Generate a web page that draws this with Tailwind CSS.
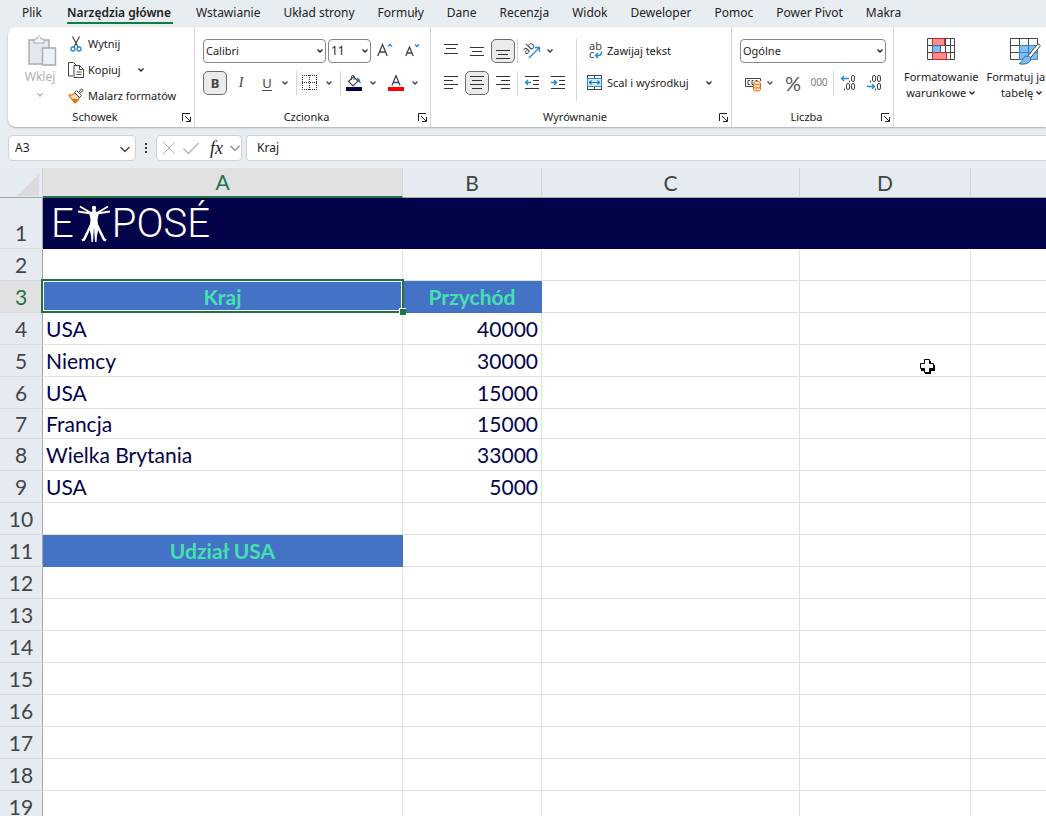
<!DOCTYPE html>
<html lang="pl">

<head>
    <meta charset="UTF-8">
    <meta name="viewport" content="width=device-width, initial-scale=1.0">
    <title>Expose - arkusz</title>
    <script src="https://cdn.jsdelivr.net/npm/@tailwindcss/browser@4"></script>
</head>

<body class="flex h-screen flex-col overflow-hidden bg-[#e8edf2] font-['Noto_Sans',sans-serif] text-xs text-[#222]">

    <!-- shared icons -->
    <svg class="hidden">
        <symbol id="chev" viewBox="0 0 8 8">
            <path d="M1.5 2.5 4 5l2.5-2.5" fill="none" stroke="currentColor" stroke-width="1.3" />
        </symbol>
        <symbol id="launch" viewBox="0 0 9 9">
            <path d="M.5 8V.5H8M3 3l5 5M8.500 4v4.500H4" fill="none" stroke="currentColor" />
        </symbol>
    </svg>

    <!-- tabs -->
    <nav class="flex h-[27px] shrink-0 items-start gap-[23px] pl-[22px] whitespace-nowrap leading-[25px]">
        <a href="#" class="mr-[2px]">Plik</a>
        <a href="#" class="h-6 border-b-2 border-[#107c41] pr-[2px] font-semibold">Narzędzia główne</a>
        <a href="#">Wstawianie</a>
        <a href="#">Układ strony</a>
        <a href="#">Formuły</a>
        <a href="#">Dane</a>
        <a href="#">Recenzja</a>
        <a href="#">Widok</a>
        <a href="#">Deweloper</a>
        <a href="#">Pomoc</a>
        <a href="#">Power Pivot</a>
        <a href="#">Makra</a>
    </nav>

    <!-- ribbon -->
    <div class="ml-2 flex h-[100px] shrink-0 overflow-hidden rounded-l-lg bg-white text-[11px] whitespace-nowrap shadow-[0_1px_2px_#a9afb5]">

        <section class="flex w-[186px] shrink-0 flex-col">
            <div class="flex h-[82px] pt-1">
                <button class="ml-1 flex w-14 flex-col items-center pt-1 text-xs text-[#b0b0b0]">
                    <svg class="h-8 w-7" viewBox="0 0 28 32" fill="none" overflow="visible">
                        <path d="M3 5h20v24H3z" fill="#e3e8ee" stroke="#a8adb2" stroke-width="1.500" />
                        <path d="M8 8V4h3c0-4 4-4 4 0h3v4z" fill="#f4f4f4" stroke="#a8adb2" />
                        <path d="M16.500 13h13v17h-13z" fill="#eef1f5" stroke="#a8adb2" stroke-width="1.500" />
                    </svg>
                    <span class="leading-5">Wklej</span>
                    <svg class="mt-1 size-2"><use href="#chev" /></svg>
                </button>
                <div class="flex flex-col">
                    <button class="flex h-[26px] items-center gap-1">
                        <svg class="size-4" viewBox="0 0 16 16" fill="none">
                            <path d="M4.500 0.500 10 11M11.500 .5 6 11" stroke="#444" stroke-width="1.200" />
                            <circle cx="5" cy="13" r="2" stroke="#1e8ad6" stroke-width="1.300" />
                            <circle cx="11" cy="13" r="2" stroke="#1e8ad6" stroke-width="1.300" />
                        </svg>
                        Wytnij
                    </button>
                    <button class="flex h-[26px] items-center gap-1">
                        <svg class="size-4" viewBox="0 0 16 16" fill="none" stroke="#444">
                            <path d="M5 14H.5V.5h5L8 3" />
                            <path d="M6 3.500h5.500l4 4v8H6zM11.500 3.500v4h4M8.500 10h5M8.500 12.500h5" />
                        </svg>
                        Kopiuj
                        <svg class="ml-3 size-2"><use href="#chev" /></svg>
                    </button>
                    <button class="flex h-[26px] items-center gap-1">
                        <svg class="size-4" viewBox="0 0 16 16" fill="none">
                            <path d="M1 7c3 .5 4.500-.5 6-2l4.500 4.500C10.500 12 9 14 7 15c-1-2-3.500-3-6-8z" fill="#fde8d3" stroke="#e8710a" stroke-width="1.200" />
                            <path d="M3 10.500 10 11 7 15z" fill="#e8710a" />
                            <path d="M6.500 4.500 8.500 2.500l2 2L13.500.8l1.700 1.700L11.500 5.500l2 2-2 2z" fill="#fff" stroke="#444" />
                        </svg>
                        Malarz formatów
                    </button>
                </div>
            </div>
            <div class="flex items-center pr-[3px] leading-4">
                <span class="grow text-center">Schowek</span>
                <button aria-label="Schowek - opcje"><svg class="size-[9px]"><use href="#launch" /></svg></button>
            </div>
        </section>

        <section class="flex w-[236px] shrink-0 flex-col border-l border-[#d6d6d6]">
            <div class="flex h-[82px] flex-col gap-2 pt-3 pl-2">
                <div class="flex h-6 items-center">
                    <label class="relative mr-[2px]">
                        <select aria-label="Czcionka" class="h-6 w-[123px] appearance-none rounded-[4px] border border-[#868686] bg-white pl-[2px] text-[11px]"><option>Calibri</option></select>
                        <svg class="pointer-events-none absolute top-2 right-[2px] size-2"><use href="#chev" /></svg>
                    </label>
                    <label class="relative">
                        <select aria-label="Rozmiar czcionki" class="h-6 w-[43px] appearance-none rounded-[4px] border border-[#868686] bg-white pl-[2px] text-xs"><option>11</option></select>
                        <svg class="pointer-events-none absolute top-2 right-[2px] size-2"><use href="#chev" /></svg>
                    </label>
                    <button class="ml-[2px] flex w-6 justify-center" aria-label="Zwiększ czcionkę">
                        <svg class="size-4" viewBox="0 0 16 16" fill="none">
                            <path d="M.8 13 5.500 1.500 10.200 13M2.400 9h6.200" stroke="#444" stroke-width="1.300" />
                            <path d="M11 3.500 13 1.500l2 2" stroke="#1e8ad6" stroke-width="1.300" />
                        </svg>
                    </button>
                    <button class="ml-[3px] flex w-6 justify-center" aria-label="Zmniejsz czcionkę">
                        <svg class="size-4" viewBox="0 0 16 16" fill="none">
                            <path d="M1.800 13 5.500 4 9.200 13M3 10h5" stroke="#444" stroke-width="1.300" />
                            <path d="M11 1.500 13 3.500l2-2" stroke="#1e8ad6" stroke-width="1.300" />
                        </svg>
                    </button>
                </div>
                <div class="flex h-6 items-center text-sm text-[#444]">
                    <button class="size-6 rounded-[5px] border border-[#6b6b6b] bg-[#ebebeb] text-[13px] leading-5 font-bold">B</button>
                    <button class="ml-[2px] size-6 font-['Liberation_Serif',serif] italic">I</button>
                    <button class="ml-[2px] size-6 text-[13px] leading-5 underline underline-offset-2">U</button>
                    <svg class="mx-[2px] size-2"><use href="#chev" /></svg>
                    <span class="ml-[5px] h-6 w-px bg-[#d6d6d6]"></span>
                    <button class="flex w-[26px] justify-center" aria-label="Obramowanie">
                        <svg class="size-4" viewBox="0 0 16 16" fill="none" stroke="#333">
                            <path d="M0 .5h15M0 7.500h15M0 14.500h15M.5 0v15M7.500 0v15M14.500 0v15" stroke-dasharray="1 1" />
                        </svg>
                    </button>
                    <svg class="mx-[2px] size-2"><use href="#chev" /></svg>
                    <span class="ml-[5px] h-6 w-px bg-[#d6d6d6]"></span>
                    <button class="flex w-[26px] justify-center" aria-label="Kolor wypełnienia">
                        <svg class="size-4" viewBox="0 0 16 16" fill="none">
                            <path d="M2.500 6.500 7.500 1.500 12 6 7 11z" stroke="#444" stroke-width="1.200" />
                            <path d="M5.500 5V1.500c0-1.500 2.500-1.500 2.500 0V5" stroke="#444" />
                            <path d="M10.500 3c3 0 4 2 4 6l-2.500-3z" fill="#1e6fb8" />
                            <path d="M0 12h16v4H0z" fill="#03034a" />
                        </svg>
                    </button>
                    <svg class="mx-[2px] size-2"><use href="#chev" /></svg>
                    <button class="ml-1 flex w-[26px] justify-center" aria-label="Kolor czcionki">
                        <svg class="size-4" viewBox="0 0 16 16" fill="none">
                            <path d="M4 10.500 8 .5l4 10M5.300 7.500h5.400" stroke="#444" stroke-width="1.300" />
                            <path d="M0 12h16v4H0z" fill="#f00" />
                        </svg>
                    </button>
                    <svg class="mx-[2px] size-2"><use href="#chev" /></svg>
                </div>
            </div>
            <div class="flex items-center pr-[3px] leading-4">
                <span class="grow text-center">Czcionka</span>
                <button aria-label="Czcionka - opcje"><svg class="size-[9px]"><use href="#launch" /></svg></button>
            </div>
        </section>

        <section class="flex w-[301px] shrink-0 flex-col border-l border-[#d6d6d6]">
            <div class="flex h-[82px] pt-3 pl-2">
                <div class="flex w-[137px] flex-col gap-2">
                    <div class="flex h-6 items-center gap-[2px] text-[#333]">
                        <button class="flex size-6 items-center justify-center" aria-label="Do góry"><svg class="size-4" viewBox="0 0 16 16" stroke="currentColor"><path d="M1 1.500h14M3 5.500h10M1 10.500h14" /></svg></button>
                        <button class="flex size-6 items-center justify-center" aria-label="Do środka"><svg class="size-4" viewBox="0 0 16 16" stroke="currentColor"><path d="M1 4.500h14M3 8.500h10M1 12.500h14" /></svg></button>
                        <button class="flex size-6 items-center justify-center rounded-[5px] border border-[#6b6b6b] bg-[#ebebeb]" aria-label="Do dołu"><svg class="size-4" viewBox="0 0 16 16" stroke="currentColor"><path d="M1 7.500h14M3 11.500h10M1 15.500h14" /></svg></button>
                        <span class="h-6 w-px bg-[#d6d6d6]"></span>
                        <button class="flex w-6 items-center justify-center" aria-label="Orientacja">
                            <svg class="size-4" viewBox="0 0 16 16" fill="none" overflow="visible">
                                <text x="1" y="11" transform="rotate(-45 3 10)" font-size="11" fill="#444">ab</text>
                                <path d="M5 15 15 5M11 4.500h4.500V9" stroke="#1e8ad6" stroke-width="1.300" />
                            </svg>
                        </button>
                        <svg class="size-2"><use href="#chev" /></svg>
                    </div>
                    <div class="flex h-6 items-center gap-[2px] text-[#333]">
                        <button class="flex size-6 items-center justify-center" aria-label="Do lewej"><svg class="size-4" viewBox="0 0 16 16" stroke="currentColor"><path d="M1 1.500h14M1 5.500h9M1 9.500h14M1 13.500h9" /></svg></button>
                        <button class="flex size-6 items-center justify-center rounded-[5px] border border-[#6b6b6b] bg-[#ebebeb]" aria-label="Wyśrodkuj"><svg class="size-4" viewBox="0 0 16 16" stroke="currentColor"><path d="M1 1.500h14M3 5.500h10M1 9.500h14M3 13.500h10" /></svg></button>
                        <button class="flex size-6 items-center justify-center" aria-label="Do prawej"><svg class="size-4" viewBox="0 0 16 16" stroke="currentColor"><path d="M1 1.500h14M6 5.500h9M1 9.500h14M6 13.500h9" /></svg></button>
                        <span class="h-6 w-px bg-[#d6d6d6]"></span>
                        <button class="flex size-6 items-center justify-center" aria-label="Zmniejsz wcięcie"><svg class="size-4" viewBox="0 0 16 16" fill="none"><path d="M1 1.500h14M9 5.500h6M9 9.500h6M1 13.500h14" stroke="#333" /><path d="M7 7.500H1.500M4 5 1.500 7.500 4 10" stroke="#1e8ad6" stroke-width="1.400" /></svg></button>
                        <button class="flex size-6 items-center justify-center" aria-label="Zwiększ wcięcie"><svg class="size-4" viewBox="0 0 16 16" fill="none"><path d="M1 1.500h14M9 5.500h6M9 9.500h6M1 13.500h14" stroke="#333" /><path d="M1 7.500h5.500M4 5l2.500 2.500L4 10" stroke="#1e8ad6" stroke-width="1.400" /></svg></button>
                    </div>
                </div>
                <div class="flex h-[62px] flex-col gap-2 border-l border-[#d6d6d6] pl-[10px]">
                    <button class="flex h-6 items-center gap-1">
                        <svg class="size-4" viewBox="0 0 16 16" fill="none" overflow="visible">
                            <text x="2" y="7" font-size="11" fill="#444">ab</text>
                            <text x="2" y="15" font-size="11" fill="#444">c</text>
                            <path d="M14.500 8.500v1c0 2-1.500 3-3 3H8.500M11 10l-2.500 2.500L11 15" stroke="#1e8ad6" stroke-width="1.400" />
                        </svg>
                        Zawijaj tekst
                    </button>
                    <button class="flex h-6 items-center gap-1">
                        <svg class="size-4" viewBox="0 0 16 16" fill="none">
                            <path d="M.5 0v15M14.500 0v15M0 .5h15M0 14.500h15M7.500 0v3M7.500 12v3" stroke="#444" />
                            <path d="M.5 3.500h14v8H.5z" fill="#d6eafa" stroke="#1e8ad6" />
                            <path d="M2.500 7.500h10M4.500 5.500l-2 2 2 2M10.500 5.500l2 2-2 2" stroke="#1e6fb8" stroke-width="1.200" />
                        </svg>
                        Scal i wyśrodkuj
                        <svg class="ml-3 size-2"><use href="#chev" /></svg>
                    </button>
                </div>
            </div>
            <div class="flex items-center pr-[3px] leading-4">
                <span class="grow text-center">Wyrównanie</span>
                <button aria-label="Wyrównanie - opcje"><svg class="size-[9px]"><use href="#launch" /></svg></button>
            </div>
        </section>

        <section class="flex w-[162px] shrink-0 flex-col border-l border-[#d6d6d6]">
            <div class="flex h-[82px] flex-col gap-2 pt-3 pl-2">
                <label class="relative w-[146px]">
                    <select aria-label="Format liczb" class="block h-6 w-full appearance-none rounded-[4px] border border-[#868686] bg-white pl-[2px] text-[11px]"><option>Ogólne</option></select>
                    <svg class="pointer-events-none absolute top-2 right-[2px] size-2"><use href="#chev" /></svg>
                </label>
                <div class="flex h-6 items-center text-[#555]">
                    <button class="flex w-[26px] justify-center" aria-label="Format księgowy">
                        <svg class="size-[18px]" viewBox="0 0 18 18" fill="none">
                            <path d="M9 12.500H1.500v-8H16.500V7" stroke="#444" />
                            <path d="M6 6.500H4v4h2M9.500 6.500H8v4h1M11.500 6.500h2" stroke="#444" />
                            <path d="M9.500 9v6.500c0 2 7 2 7 0V9" fill="#fbd9b5" stroke="#e8710a" />
                            <ellipse cx="13" cy="9" rx="3.500" ry="1.500" fill="#fff" stroke="#e8710a" />
                            <path d="M9.500 12.500c0 2 7 2 7 0" stroke="#e8710a" />
                        </svg>
                    </button>
                    <svg class="size-2"><use href="#chev" /></svg>
                    <button class="ml-[6px] w-[26px] font-[Lato,sans-serif] text-xl leading-6">%</button>
                    <button class="w-[26px] text-[10px] text-[#777]">000</button>
                    <span class="mx-[1px] h-6 w-px bg-[#d6d6d6]"></span>
                    <button class="flex w-[26px] justify-center" aria-label="Zwiększ dziesiętne">
                        <svg class="h-[18px] w-4" viewBox="0 0 16 18" fill="none">
                            <path d="M9 4.500H1.500M4 2 1.500 4.500 4 7" stroke="#1e8ad6" stroke-width="1.300" />
                            <g stroke="#444"><rect x="11.500" y="1.500" width="3" height="6" rx="1.500" /><rect x="6.500" y="9.500" width="3" height="6" rx="1.500" /><rect x="11.500" y="9.500" width="3" height="6" rx="1.500" /><path d="M4.500 14.500v2M9.500 6.500v2" /></g>
                        </svg>
                    </button>
                    <button class="flex w-[26px] justify-center" aria-label="Zmniejsz dziesiętne">
                        <svg class="h-[18px] w-4" viewBox="0 0 16 18" fill="none">
                            <path d="M1 12.500h7.500M6 10l2.500 2.500L6 15" stroke="#1e8ad6" stroke-width="1.300" />
                            <g stroke="#444"><rect x="6.500" y="1.500" width="3" height="6" rx="1.500" /><rect x="11.500" y="1.500" width="3" height="6" rx="1.500" /><rect x="11.500" y="9.500" width="3" height="6" rx="1.500" /><path d="M4.500 6.500v2M9.500 14.500v2" /></g>
                        </svg>
                    </button>
                </div>
            </div>
            <div class="flex items-center pr-[3px] leading-4">
                <span class="grow text-center">Liczba</span>
                <button aria-label="Liczba - opcje"><svg class="size-[9px]"><use href="#launch" /></svg></button>
            </div>
        </section>

        <section class="flex shrink-0 gap-2 border-l border-[#d6d6d6] pt-[11px] pl-[10px]">
            <button class="flex flex-col items-center leading-4">
                <svg class="mb-[7px] h-6 w-7" viewBox="0 0 28 24" fill="none">
                    <path d="M.5.5h27v21H.5zM.5 7.500h27M.5 14.500h27M5.500.5v21M18.500.5v21M23.500.5v21" stroke="#444" />
                    <path d="M5.500.5h12v7h-12z" fill="#ff8f8f" stroke="#e02020" />
                    <path d="M5.500 7.500h8v7h-8z" fill="#83bdf0" stroke="#1e6fb8" />
                    <path d="M5.500 14.500h14v7h-14z" fill="#ff8f8f" stroke="#e02020" />
                </svg>
                <span>Formatowanie</span>
                <span class="flex items-center gap-[2px]">warunkowe <svg class="size-2"><use href="#chev" /></svg></span>
            </button>
            <button class="flex flex-col items-center leading-4">
                <svg class="mb-[7px] h-6 w-6" viewBox="0 0 24 24" fill="none" overflow="visible">
                    <path d="M.5.5h27v21H.5z" stroke="#444" />
                    <path d="M9.500 7.500h18v14h-18z" fill="#83bdf0" />
                    <path d="M.5 7.500h9M.5 14.500h9M9.500.5v7M18.500.5v7" stroke="#444" />
                    <path d="M9.500 7.500v14M18.500 7.500v14M9.500 7.500h18M9.500 14.500h18" stroke="#1e8ad6" />
                    <path d="M17 19 27 7c2-2 4 0 2.500 2L19.500 21z" fill="#fff" stroke="#444" />
                    <path d="M18.500 18.500c3 1 3 4 0 6-3 2-7 2-9.500 1 3-1 3-3 4-5s3.500-3 5.500-2z" fill="#83bdf0" stroke="#1e6fb8" />
                </svg>
                <span>Formatuj jako</span>
                <span class="flex items-center gap-[2px]">tabelę <svg class="size-2"><use href="#chev" /></svg></span>
            </button>
        </section>
    </div>

    <!-- formula bar -->
    <div class="flex h-[41px] shrink-0 items-center pl-2">
        <label class="relative">
            <select aria-label="Pole nazwy" class="block h-[26px] w-32 appearance-none rounded-[4px] border border-[#cfd3d7] bg-white pl-[6px]"><option>A3</option></select>
            <svg class="pointer-events-none absolute top-2 right-[5px] size-3" viewBox="0 0 12 12" fill="none" stroke="#444" stroke-width="1.300"><path d="m1.500 4 4.500 4.500L10.500 4" /></svg>
        </label>
        <svg class="mx-2 h-3 w-1" viewBox="0 0 4 12" fill="#333"><path d="M1 1h2v2H1zM1 5h2v2H1zM1 9h2v2H1z" /></svg>
        <div class="flex h-[26px] w-[86px] items-center justify-between rounded-[4px] border border-[#cfd3d7] bg-white pr-[1px] pl-[5px]">
            <button aria-label="Anuluj"><svg class="size-3.5" viewBox="0 0 14 14" stroke="#b4b4b4"><path d="m1 1 12 12M13 1 1 13" /></svg></button>
            <button aria-label="Wpis"><svg class="h-3.5 w-4" viewBox="0 0 16 14" fill="none" stroke="#b4b4b4" stroke-width="1.300"><path d="m.5 7.500 5 5L15.500 2" /></svg></button>
            <button class="pl-1 font-['Liberation_Serif',serif] text-lg leading-5 italic">fx</button>
            <svg class="size-2.5" viewBox="0 0 10 10" fill="none" stroke="#888" stroke-width="1.200"><path d="m.5 3 4.500 4.500L9.500 3" /></svg>
        </div>
        <input aria-label="Pasek formuły" value="Kraj" class="ml-1 h-[26px] grow rounded-l-[4px] border border-r-0 border-[#cfd3d7] bg-white pl-[10px]">
    </div>

    <!-- sheet -->
    <main class="relative grow overflow-hidden bg-white">
        <table class="w-full table-fixed border-separate border-spacing-0 font-[Lato,sans-serif] text-[21px] leading-[31px] text-[#03034a] [&_td]:border-r [&_td]:border-b [&_td]:border-[#e0e0e0] [&_td]:px-[3px] [&_td]:py-0 [&_td:last-child]:border-r-0 [&_tbody_th]:border-r [&_tbody_th]:border-b [&_tbody_th]:border-r-[#a6a6a6] [&_tbody_th]:border-b-[#d8dbe0] [&_tbody_th]:bg-[#e6ebf1] [&_tbody_th]:p-0 [&_tbody_th]:align-bottom [&_tbody_th]:font-normal [&_tbody_th]:text-[#444]">
            <colgroup>
                <col class="w-[43px]">
                <col class="w-[360px]">
                <col class="w-[139px]">
                <col class="w-[258px]">
                <col class="w-[171px]">
                <col>
            </colgroup>
            <thead>
                <tr class="h-[30px] leading-7 text-[#444] [&_th]:border-r [&_th]:border-b [&_th]:border-r-[#d0d4d8] [&_th]:border-b-[#a6a6a6] [&_th]:bg-[#e6ebf1] [&_th]:p-0 [&_th]:font-normal">
                    <th><svg class="mt-1 ml-[17px] size-[22px]" viewBox="0 0 22 22" fill="#dcdadd"><path d="M22 0v22H0z" /></svg></th>
                    <th class="border-b-2! border-b-[#217346]! bg-[#e1e1e1]! text-[#217346]">A</th>
                    <th>B</th>
                    <th>C</th>
                    <th>D</th>
                    <th class="border-r-0!"></th>
                </tr>
            </thead>
            <tbody>
                <tr class="h-[51px]">
                    <th>1</th>
                    <td colspan="5" class="border-0! bg-[#03034a] pl-2!">
                        <div class="flex h-[51px] items-center font-[Roboto,sans-serif] text-[40px] leading-[51px] font-light text-white">
                            <span>E</span>
                            <svg class="mr-[2px] ml-1 h-[38px] w-8" viewBox="0 0 32 38" fill="#fff" stroke="#fff">
                                <circle cx="16" cy="3" r="2.200" stroke="none" />
                                <path d="M14.500 5h3l.5 1.500 3 1-1.500 7 .5 5 .5 4-1.500 7-.5 6.500h-1.500L16 22l-1 15h-1.500L13 30.500l-1.500-7 .5-4 .5-5-1.500-7 3-1z" stroke="none" />
                                <path d="M0 6.500 13 8.500 16 9l3-.5L32 6.500M2 1.500 13 8M30 1.500 19 8" fill="none" stroke-width="1.800" />
                                <path d="M13 20 6 34.500l-2 1M19 20l7 14.500 2 1" fill="none" stroke-width="2.500" />
                            </svg>
                            <span>POSÉ</span>
                        </div>
                    </td>
                </tr>
                <tr class="h-8"><th>2</th><td></td><td></td><td></td><td></td><td></td></tr>
                <tr class="h-8 text-center font-bold text-[#45e0b0]">
                    <th class="bg-[#e1e1e1]! text-[#217346]!">3</th>
                    <td class="relative bg-[#4472c4]">Kraj
                        <!-- selection frame with fill handle -->
                        <div class="absolute -top-[2px] -right-[2px] -bottom-[1px] -left-[2px] border-2 border-[#217346] outline-1 -outline-offset-3 outline-white"></div>
                        <div class="absolute -right-1 -bottom-[3px] size-[7px] border-t border-l border-white bg-[#217346]"></div>
                    </td>
                    <td class="border-[#4472c4]! bg-[#4472c4]">Przychód</td>
                    <td></td><td></td><td></td>
                </tr>
                <tr class="h-8"><th>4</th><td>USA</td><td class="text-right">40000</td><td></td><td></td><td></td></tr>
                <tr class="h-8"><th>5</th><td>Niemcy</td><td class="text-right">30000</td><td></td><td></td><td></td></tr>
                <tr class="h-8"><th>6</th><td>USA</td><td class="text-right">15000</td><td></td><td></td><td></td></tr>
                <tr class="h-[30px] leading-[29px]"><th>7</th><td>Francja</td><td class="text-right">15000</td><td></td><td></td><td></td></tr>
                <tr class="h-8"><th>8</th><td>Wielka Brytania</td><td class="text-right">33000</td><td></td><td></td><td></td></tr>
                <tr class="h-8"><th>9</th><td>USA</td><td class="text-right">5000</td><td></td><td></td><td></td></tr>
                <tr class="h-8"><th>10</th><td></td><td></td><td></td><td></td><td></td></tr>
                <tr class="h-8"><th>11</th><td class="border-[#4472c4]! bg-[#4472c4] text-center font-bold text-[#45e0b0]">Udział USA</td><td></td><td></td><td></td><td></td></tr>
                <tr class="h-8"><th>12</th><td></td><td></td><td></td><td></td><td></td></tr>
                <tr class="h-8"><th>13</th><td></td><td></td><td></td><td></td><td></td></tr>
                <tr class="h-8"><th>14</th><td></td><td></td><td></td><td></td><td></td></tr>
                <tr class="h-8"><th>15</th><td></td><td></td><td></td><td></td><td></td></tr>
                <tr class="h-8"><th>16</th><td></td><td></td><td></td><td></td><td></td></tr>
                <tr class="h-8"><th>17</th><td></td><td></td><td></td><td></td><td></td></tr>
                <tr class="h-8"><th>18</th><td></td><td></td><td></td><td></td><td></td></tr>
                <tr class="h-8"><th>19</th><td></td><td></td><td></td><td></td><td></td></tr>
            </tbody>
        </table>

        <!-- mouse pointer -->
        <svg class="absolute top-[190px] left-[919px] size-4" viewBox="0 0 16 16">
            <path d="M6 3h6v4h4v6h-4v3H6v-3H2V7h4z" fill="#000" />
            <path d="M5.500 1.500h5v4h4v5h-4v4h-5v-4h-4v-5h4z" fill="#fff" stroke="#000" />
        </svg>
    </main>
</body>

</html>
